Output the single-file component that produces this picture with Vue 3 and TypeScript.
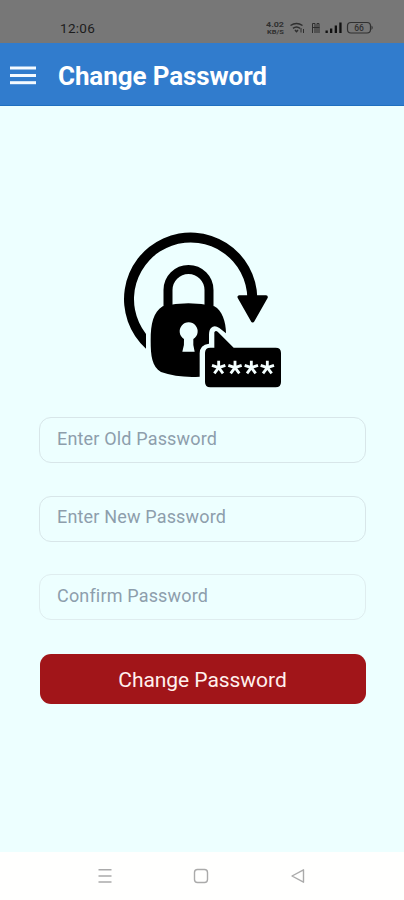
<script setup lang="ts">
import { ref } from 'vue'

interface Field {
  id: string
  label: string
}

const fields: Field[] = [
  { id: 'old', label: 'Enter Old Password' },
  { id: 'new', label: 'Enter New Password' },
  { id: 'confirm', label: 'Confirm Password' },
]

const values = ref<Record<string, string>>({ old: '', new: '', confirm: '' })
</script>

<template>
  <div class="screen">
    <div class="status">
      <span class="clock">12:06</span>
      <svg class="indicators" viewBox="0 0 108 16" width="108" height="16">
        <g font-family="Roboto, sans-serif" font-weight="700" fill="#303030">
          <text x="0" y="6.500" font-size="6.500" textLength="18" lengthAdjust="spacingAndGlyphs">4.02</text>
          <text x="1" y="14.200" font-size="5.800" textLength="17" lengthAdjust="spacingAndGlyphs">KB/S</text>
        </g>
        <g fill="none" stroke="#2e2e2e" stroke-width="1.500">
          <path d="M24.500 5.500Q30.500 1.500 36.500 5.500M27 8.300Q30.500 5.600 34 8.300" />
          <path d="M29 10L30.500 11.700L32 10" />
          <path d="M35 8V12.500M37.500 9V13" stroke-width="1" />
          <path d="M46.500 13V3.500H49V13M51 13V3.500H53V13M46 7.500H53.500" stroke-width="1" />
        </g>
        <g fill="#111">
          <rect x="59.500" y="10.500" width="2.300" height="2.500" />
          <rect x="64" y="8.500" width="2.300" height="4.500" />
          <rect x="68.700" y="5.500" width="2.300" height="7.500" />
          <rect x="73.300" y="2.500" width="2.300" height="10.500" />
        </g>
        <rect x="81.500" y="2.500" width="23" height="10.500" rx="3.500" fill="none" stroke="#303030" stroke-width="1.200" />
        <path d="M105.500 5.500Q108 7.700 105.500 10Z" fill="#303030" />
        <text x="93" y="11" text-anchor="middle" font-family="Roboto, sans-serif" font-weight="500" font-size="8.500" fill="#303030">66</text>
      </svg>
    </div>

    <header class="bar">
      <svg class="menu" viewBox="0 0 26 19" width="26" height="19" fill="#f4faff">
        <rect y="0.500" width="26" height="3" />
        <rect y="8" width="26" height="3" />
        <rect y="15.200" width="26" height="3" />
      </svg>
      <h1>Change Password</h1>
    </header>

    <main class="content">
      <svg class="hero" viewBox="0 0 570 540" width="190" height="180">
        <path d="M108 386A200 200 0 1 1 442 235H412A170 170 0 1 0 108 342Z" />
        <path d="M388 231H468L428 302Z" stroke="#000" stroke-width="11" stroke-linejoin="round" />
        <path d="M174 270V210A61 61 0 0 1 297 210V270" fill="none" stroke="#000" stroke-width="27" />
        <path d="M158 259Q235 240 313 259C336 271 348 306 348 340L328 324Q313 314 303 324Q297 330 297 345V371Q269 375 269 400V470Q205 474 153 456C126 440 122 409 122 361C122 312 130 276 158 259Z" />
        <path d="M222 357A27 27 0 1 1 250 357Q248 374 254 395H217Q224 374 222 357Z" fill="#edffff" />
        <path d="M313 337Q318 329 326 338L371 383H497Q513 383 513 399V486Q513 502 497 502H301Q285 502 285 486V399Q285 383 301 383H313Z" />
        <g fill="none" stroke="#f4ffff" stroke-width="8.500">
          <path v-for="x in [326, 375, 424, 472]" :key="x" :transform="`translate(${x} 443)`" d="M0 0V-21M0 0L20 -7M0 0L13 17M0 0L-13 17M0 0L-20 -7" />
        </g>
      </svg>

      <form class="form" @submit.prevent>
        <input
          v-for="field in fields"
          :key="field.id"
          v-model="values[field.id]"
          class="field"
          :class="field.id"
          type="text"
          :placeholder="field.label"
        />
        <button class="submit" type="submit">Change Password</button>
      </form>
    </main>

    <nav class="nav">
      <svg viewBox="0 0 16 16" width="16" height="16" fill="none" stroke="#aaa" stroke-width="1.400">
        <path d="M1.500 1.800H14.500M1.500 8H14.500M1.500 14H14.500" />
      </svg>
      <svg viewBox="0 0 16 16" width="16" height="16" fill="none" stroke="#aaa" stroke-width="1.400">
        <rect x="1.500" y="1.500" width="13" height="13" rx="3" />
      </svg>
      <svg viewBox="0 0 16 16" width="16" height="16" fill="none" stroke="#aaa" stroke-width="1.400" stroke-linejoin="round">
        <path d="M14.500 1.800V14.200L3 8Z" />
      </svg>
    </nav>
  </div>
</template>

<style>
body {
  background: #fff;
}
</style>

<style scoped>
.screen {
  width: 404px;
  height: 900px;
  display: flex;
  flex-direction: column;
  overflow: hidden;
  background: #edffff;
  font-family: Roboto, sans-serif;
}

.status {
  height: 43px;
  box-sizing: border-box;
  padding: 12px 30px 0 60px;
  display: flex;
  justify-content: space-between;
  align-items: center;
  background: #777;
}

.clock {
  font-size: 13.5px;
  line-height: 16px;
  letter-spacing: 0.3px;
  color: #1c1c1c;
}

.bar {
  height: 63px;
  box-sizing: border-box;
  padding: 2px 10px 0;
  display: flex;
  align-items: center;
  gap: 22px;
  background: #317ccd;
  border-bottom: 1px solid #1f70c0;
}

.bar h1 {
  margin: 0;
  padding-top: 1px;
  font-size: 26px;
  line-height: 30px;
  font-weight: 700;
  letter-spacing: -0.1px;
  white-space: nowrap;
  color: #fff;
}

.content {
  flex: 1;
  display: flex;
  flex-direction: column;
  padding: 114px 38px 0 39px;
}

.hero {
  display: block;
  margin-left: 71px;
}

.form {
  margin-top: 17px;
  display: flex;
  flex-direction: column;
}

.field {
  height: 46px;
  box-sizing: border-box;
  margin: 0 0 33px;
  padding: 0 17px 3px;
  border: 1px solid #d8e6e9;
  border-radius: 12px;
  outline: none;
  background: transparent;
  font-family: inherit;
  font-size: 18px;
  letter-spacing: 0.17px;
  color: #344;
}

.field.new {
  margin-bottom: 32px;
  padding-bottom: 5px;
}

.field.confirm {
  margin-bottom: 34px;
  border-color: #dfedef;
}

.field::placeholder {
  color: #8d9eac;
  opacity: 1;
}

.submit {
  height: 50px;
  margin-left: 1px;
  border: 0;
  border-radius: 11px;
  padding: 1px 1px 0 0;
  background: #a11519;
  font-family: inherit;
  font-size: 21px;
  letter-spacing: -0.05px;
  color: #fff0ed;
}

.nav {
  height: 48px;
  padding-right: 2px;
  display: flex;
  justify-content: center;
  align-items: center;
  gap: 80px;
  background: #fffffe;
}
</style>
